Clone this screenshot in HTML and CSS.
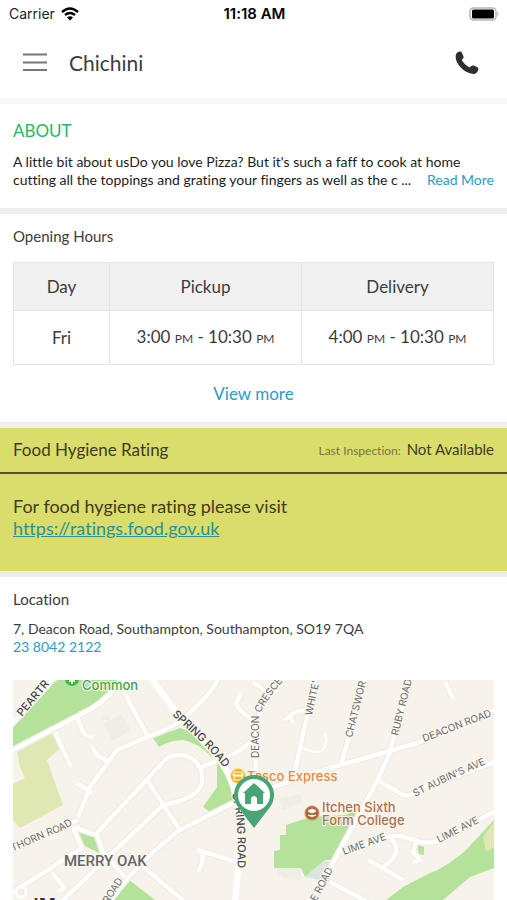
FILE: index.html
```
<!DOCTYPE html>
<html lang="en">
<head>
    <meta charset="UTF-8">
    <meta name="viewport" content="width=device-width, initial-scale=1.0">
    <title>Chichini</title>
    <link rel="stylesheet" href="styles.css">
</head>
<body>
    <header class="app-header">
        <div class="status-bar">
            <div class="carrier">
                <span>Carrier</span>
                <svg width="18" height="14" viewBox="0 0 18 14" aria-hidden="true">
                    <path d="M1 5Q9-2 17 5M4 8Q9 4 14 8" fill="none" stroke="#000" stroke-width="2.4"/>
                    <path d="M6 10.4Q9 8 12 10.4L9 13.6Z"/>
                </svg>
            </div>
            <span class="time">11:18 AM</span>
            <div class="battery">
                <svg width="31" height="14" viewBox="0 0 31 14" aria-hidden="true">
                    <rect x="1" y="1" width="26" height="12" rx="3.5" fill="#fff" stroke="#b5b5b5" stroke-width="1.5"/>
                    <rect x="3" y="2.5" width="22" height="9" rx="1.5"/>
                    <path d="M28.5 4.5Q31 7 28.5 9.5Z" fill="#b5b5b5"/>
                </svg>
            </div>
        </div>
        <div class="nav-bar">
            <button class="icon-btn" type="button" aria-label="Menu">
                <svg width="24" height="20" viewBox="0 0 24 20">
                    <path d="M0 1.5H24M0 9.5H24M0 17H24" stroke="#777" stroke-width="1.8"/>
                </svg>
            </button>
            <h1>Chichini</h1>
            <a class="call" href="tel:2380422122" aria-label="Call">
                <svg width="24" height="24" viewBox="0 0 24 24">
                    <path d="M.6 5C.8 2.6 2.4 1 4.6.6C5.6.4 6.4.8 6.9 1.8L8.4 5.2C8.8 6.2 8.6 7.2 7.8 7.8L6.8 9C8.6 12.2 11.2 14.8 14.6 16.6L16 15.2C16.8 14.4 17.6 14.2 18.6 14.6L22 16C23.2 16.6 23.7 17.6 23.3 18.8C22.5 21.4 20.8 23.2 18.2 23C9.5 22.2.4 13.4.6 5Z" fill="#2e2e2e"/>
                </svg>
            </a>
        </div>
    </header>

    <main>
        <section class="about">
            <h2>ABOUT</h2>
            <p>A little bit about usDo you love Pizza? But it's such a faff to cook at home cutting all the toppings and grating your fingers as well as the c ... <a href="#about">Read More</a></p>
        </section>

        <section class="hours">
            <h3>Opening Hours</h3>
            <table>
                <thead>
                    <tr>
                        <th class="day" scope="col">Day</th>
                        <th scope="col">Pickup</th>
                        <th scope="col">Delivery</th>
                    </tr>
                </thead>
                <tbody>
                    <tr>
                        <td>Fri</td>
                        <td>3:00 <small>PM</small> - 10:30 <small>PM</small></td>
                        <td>4:00 <small>PM</small> - 10:30 <small>PM</small></td>
                    </tr>
                </tbody>
            </table>
            <button class="view-more" type="button">View more</button>
        </section>

        <section class="hygiene">
            <div class="hygiene-head">
                <h3>Food Hygiene Rating</h3>
                <p><span class="label">Last Inspection:</span> Not Available</p>
            </div>
            <p class="hygiene-body">For food hygiene rating please visit<br>
                <a href="https://ratings.food.gov.uk">https://ratings.food.gov.uk</a></p>
        </section>

        <section class="location">
            <h3>Location</h3>
            <address>7, Deacon Road, Southampton, Southampton, SO19 7QA<br>
                <a href="tel:2380422122">23 8042 2122</a></address>
            <svg class="map" viewBox="0 0 481 220" role="img" aria-label="Map of Merry Oak, Southampton">
                <defs>
                    <path id="peartree" d="M9 37L46-7"/>
                    <path id="spring-top" d="M159 35C176 51 198 69 215 93"/>
                    <path id="spring-low" d="M219 114Q227 145 224 196"/>
                    <path id="deacon-cres" d="M246 78L246 39Q247 27 275-5"/>
                    <path id="thorn" d="M-6 174L35 156Q54 150 68 138"/>
                    <path id="aubins" d="M402 117L432 102L482 80"/>

                    <!-- street network, drawn twice: soft block edge, then the road itself -->
                    <g id="streets">
                        <path d="M-2 45L42-3M0 70L40 49L67 35Q90 24 102 8L116-3M42 52L58 87M64 37L70 52Q73 57 80 57M110 10L134 55"/>
                        <path d="M206-3Q200 12 174 35Q166 45 134 57L104 70L77 107L65 137M79 67L84 75L95 81M64 103L79 113"/>
                        <path d="M84 153L152 80Q160 73 174 76Q191 84 189 102Q187 118 150 125M189 87L214 77Q229 70 240 60"/>
                        <path d="M150 125L50 220M134 100L167 150M220 123L167 150Q130 177 97 220"/>
                        <path d="M60 147L84 155L90 173L112 197M60 148L69 168L0 212M39 193L52 208L46 211M130 187L170 220M184 170L224 182M190 172L189 184L185 192M0 170L65 140"/>
                        <path d="M270 2Q246 28 244 40L242 110M240 2L255 13M228 13L223 23Q225 31 243 42"/>
                        <path d="M303-3L282 90M293 30L282 32L272 40M276 36L280 42M353-3L337 53L328 85M398-3L380 60L377 73L363 103L320 183L300 222"/>
                        <path d="M482 30L407 62L373 72L303 92L230 118M365 100L390 115Q399 117 407 109L482 82M432 2L440 18"/>
                        <path d="M484 130L440 154Q423 165 407 162L388 156Q373 154 330 173M378 159Q392 172 370 187M355 180L390 200M403 163L400 172L407 180L400 183M317 202L355 222"/>
                    </g>
                </defs>

                <rect width="481" height="220" fill="#f7f3eb"/>

                <!-- parks and fields -->
                <g fill="#b5e29a">
                    <path d="M42 0H104L99 10Q80 28 62 35L0 68V43Z"/>
                    <path d="M140 58L167 48Q190 54 200 78Q184 62 170 60Q158 60 146 67Z"/>
                    <path d="M204 80L217 103L220 122L197 132L190 127L204 107Z"/>
                    <path d="M62 150L82 157L88 174L70 165Z"/>
                    <path d="M115 199L142 220H100Z"/>
                    <path d="M261 171V188H288L292 197L312 180H320L348 125L333 135L297 137L273 145V155H267V170Z"/>
                    <path d="M481 140L453 170Q432 188 417 193L390 207L373 220H430L457 197L481 188Z"/>
                    <path d="M403 164L411 167V175L406 174Z"/>
                </g>
                <g fill="#dfe8b2">
                    <path d="M4 72L42 52L49 67L34 80L50 125L7 148L0 140V104L12 98L7 87Z"/>
                    <path d="M470 157L481 142V167L473 172Z"/>
                </g>
                <path d="M292 197L312 180L320 184L316 202Z" fill="#dde5df"/>
                <path d="M91 44L108 34L118 50L99 61ZM88 38L94 35L98 42ZM266 119L287 114L290 122L270 130ZM261 188H288V200L270 198Z" fill="#f0ede6"/>

                <use href="#streets" class="road-edge"/>
                <use href="#streets" class="road"/>
                <path class="road lane" d="M290 68Q308 77 312 66Q315 58 311 53"/>
                <path class="road main-road" d="M137-3L164 33L207 80Q224 105 227 140V167L222 222"/>
                <circle cx="8" cy="212" r="5" fill="#f2eee7" stroke="#fff" stroke-width="3"/>

                <g class="street-name">
                    <text class="strong"><textPath href="#peartree">PEARTR</textPath></text>
                    <text class="strong"><textPath href="#spring-top">SPRING ROAD</textPath></text>
                    <text class="strong"><textPath href="#spring-low">SPRING ROAD</textPath></text>
                    <text><textPath href="#deacon-cres">DEACON CRESCE</textPath></text>
                    <text><textPath href="#thorn">ATHORN ROAD</textPath></text>
                    <text><textPath href="#aubins">ST AUBIN'S AVE</textPath></text>
                    <text transform="translate(299 36) rotate(-78)">WHITE'</text>
                    <text transform="translate(339 58) rotate(-76)">CHATSWOR</text>
                    <text transform="translate(385 56) rotate(-76)">RUBY ROAD</text>
                    <text transform="translate(411 62) rotate(-21)">DEACON ROAD</text>
                    <text transform="translate(331 175) rotate(-20)">LIME AVE</text>
                    <text transform="translate(426 163) rotate(-27)">LIME AVE</text>
                    <text transform="translate(303 222) rotate(-62)">E ROAD</text>
                    <text transform="translate(95 224) rotate(-57)">ROAD</text>
                </g>

                <text class="district" x="51" y="186">MERRY OAK</text>
                <text class="town" x="20" y="231">'M</text>

                <circle cx="59" cy="-1" r="7" fill="#43b649"/>
                <path d="M59-3V4M56 1H62" stroke="#fff" stroke-width="1.5"/>
                <text class="place park" x="69" y="10">Common</text>

                <circle cx="225" cy="96" r="7" fill="#f8ad1b" stroke="#f7b940"/>
                <path d="M221 92H229L230 95H220ZM221 96H229V100H221Z" fill="none" stroke="#fff" stroke-width="1.2"/>
                <text class="place shop" x="234" y="101">Tesco Express</text>

                <circle cx="299" cy="133" r="7" fill="#b4673a" stroke="#c98d68"/>
                <path d="M295 131L299 129L303 131L299 133ZM295 135Q299 138 303 135" fill="#fff" stroke="#fff"/>
                <text class="place school" x="309" y="132">Itchen Sixth</text>
                <text class="place school" x="309" y="145">Form College</text>

                <path d="M241 148L225 127A20 20 0 1 1 257 127Z" fill="#46a475"/>
                <circle cx="241" cy="115" r="16" fill="#fff"/>
                <path d="M241 103L252 113H250V124H244V118Q241 114 238 118V124H232V113H230Z" fill="#46a475"/>
            </svg>
        </section>
    </main>
</body>
</html>
```

FILE: styles.css
```
/* CSS Reset */
* {
    margin: 0;
    padding: 0;
    box-sizing: border-box;
}

body {
    font-family: Lato, sans-serif;
    font-size: 15px;
    line-height: 18px;
    font-variant-ligatures: none;
    background-color: #fff;
    color: #3c3c3c;
    overflow-x: hidden;
}

a {
    color: #2b9bc9;
    text-decoration: none;
}

button {
    background: none;
    border: none;
    font-family: inherit;
    cursor: pointer;
}

svg {
    display: block;
}

h1,
h2,
h3 {
    font-weight: normal;
}

/* Header */
.app-header {
    border-bottom: 6px solid #f7f7f7;
}

.status-bar {
    display: grid;
    grid-template-columns: 1fr auto 1fr;
    align-items: center;
    height: 27px;
    padding: 0 7px 0 9px;
    font-family: Inter, sans-serif;
    font-size: 14px;
    color: #222;
}

.carrier {
    display: flex;
    align-items: center;
    gap: 6px;
}

.time {
    font-size: 15px;
    font-weight: 600;
    color: #000;
}

.battery {
    justify-self: end;
}

.nav-bar {
    display: flex;
    align-items: center;
    height: 71px;
    padding: 0 28px 0 23px;
}

.nav-bar h1 {
    flex: 1;
    margin-left: 22px;
    font-size: 21px;
    line-height: 28px;
}

/* Sections */
section {
    padding: 0 13px;
    border-bottom: 6px solid #eee;
}

section h3 {
    font-size: 15px;
    line-height: 18px;
}

.about {
    padding-top: 16px;
    padding-bottom: 19px;
}

.about h2 {
    margin-bottom: 12px;
    font-size: 17px;
    line-height: 21px;
    color: #25b860;
}

.about p {
    font-size: 14px;
    color: #1c1c1c;
}

.about p a {
    float: right;
}

.hours {
    padding-top: 13px;
}

.hours table {
    width: 100%;
    margin-top: 17px;
    table-layout: fixed;
    border-collapse: collapse;
    font-size: 17px;
    text-align: center;
}

.hours th,
.hours td {
    border: 1px solid #e4e4e4;
    font-weight: normal;
}

.hours th {
    height: 48px;
    background: #f1f1f1;
}

.hours td {
    height: 54px;
}

.hours .day {
    width: 20%;
}

.hours small {
    font-size: 12px;
}

.view-more {
    display: block;
    margin: 0 auto;
    padding: 18px 0;
    font-size: 17px;
    line-height: 21px;
    color: #2b9bc9;
}

/* Food hygiene */
.hygiene {
    padding: 0;
    background: #dadd6b;
    color: #3f3b1e;
}

.hygiene-head {
    display: flex;
    align-items: center;
    justify-content: space-between;
    height: 46px;
    padding: 0 13px;
    border-bottom: 2px solid #57521f;
}

.hygiene-head h3 {
    font-size: 17px;
}

.hygiene-head .label {
    margin-right: 2px;
    font-size: 12px;
    color: #77753f;
}

.hygiene-body {
    padding: 21px 13px 32px;
    font-size: 18px;
    line-height: 22px;
}

.hygiene-body a {
    color: #26939c;
    text-decoration: underline;
}

/* Location */
.location {
    padding-top: 13px;
    border-bottom: none;
}

.location address {
    margin: 12px 0 24px;
    font-size: 14px;
    font-style: normal;
}

.map {
    width: 100%;
    height: auto;
}

.road-edge,
.road {
    fill: none;
    stroke: #fff;
    stroke-width: 4;
    stroke-linejoin: round;
}

.road-edge {
    stroke: #f1eee8;
    stroke-width: 7;
}

.main-road {
    stroke-width: 6;
}

.lane {
    stroke-width: 2;
}

.map text {
    font-family: Inter, sans-serif;
    paint-order: stroke;
    stroke: #faf7f1;
    stroke-width: 2;
}

.street-name {
    font-size: 10px;
    fill: #6c6c6c;
}

.street-name .strong {
    font-size: 11px;
    font-weight: 500;
    fill: #474747;
}

.map .district {
    font-family: Roboto, sans-serif;
    font-size: 15px;
    font-weight: 500;
    fill: #666;
}

.map .town {
    font-size: 18px;
    font-weight: 700;
    fill: #333;
}

.place {
    font-size: 13px;
    font-weight: 500;
}

.park {
    fill: #3ea84b;
}

.shop {
    fill: #e58a3c;
}

.school {
    fill: #b06f4c;
}
```
